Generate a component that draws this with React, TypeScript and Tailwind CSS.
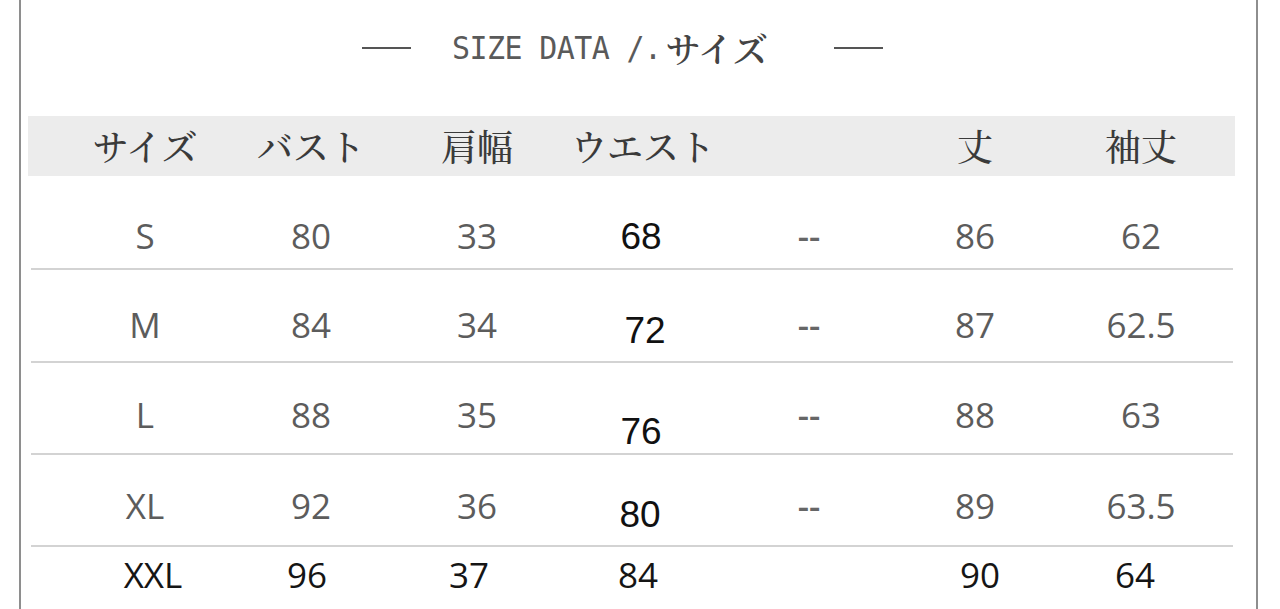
import React from 'react';

type Row = {
  cells: string[];
  pad: string;
  tone: 'gray' | 'black';
  shift?: Record<number, string>;
};

const headers = ['サイズ', 'バスト', '肩幅', 'ウエスト', '', '丈', '袖丈'];

// column 4 (ウエスト) is pasted in black and sits a bit lower than the rest
const rows: Row[] = [
  { cells: ['S', '80', '33', '68', '--', '86', '62'], pad: 'pt-[40px] pb-[12px]', tone: 'gray', shift: { 3: 'translate-y-[1px] -translate-x-[2px]' } },
  { cells: ['M', '84', '34', '72', '--', '87', '62.5'], pad: 'pt-[35px] pb-[16px]', tone: 'gray', shift: { 3: 'translate-y-[6px] translate-x-[2px]' } },
  { cells: ['L', '88', '35', '76', '--', '88', '63'], pad: 'pt-[32px] pb-[18px]', tone: 'gray', shift: { 3: 'translate-y-[17px] -translate-x-[2px]' } },
  { cells: ['XL', '92', '36', '80', '--', '89', '63.5'], pad: 'pt-[31px] pb-[19px]', tone: 'gray', shift: { 3: 'translate-y-[9px] -translate-x-[3px]' } },
  {
    cells: ['XXL', '96', '37', '84', '', '90', '64'],
    pad: 'pt-[8px]',
    tone: 'black',
    shift: { 0: 'translate-x-[8px]', 1: '-translate-x-[4px]', 2: '-translate-x-[8px]', 3: '-translate-x-[5px]', 5: 'translate-x-[5px]', 6: '-translate-x-[6px]' },
  },
];

const serifJp = "font-['Noto_Serif_CJK_JP','Noto_Sans_CJK_JP',serif]";

function Divider() {
  return <div className="ml-[10px] mr-[23px] h-[2px] bg-[#d3d3d3]" />;
}

function DataRow({ row }: { row: Row }) {
  return (
    <div className={`grid grid-cols-[repeat(7,166px)] pl-[41px] ${row.pad}`}>
      {row.cells.map((c, i) => {
        const black = row.tone === 'black' || i === 3;
        const font =
          i === 3 && row.tone === 'gray'
            ? "font-['Liberation_Sans',Arial,sans-serif] text-[37px] text-[#111]"
            : black
              ? "font-['Open_Sans',sans-serif] text-[35px] text-[#151515]"
              : i === 4
                ? "font-['Open_Sans',sans-serif] text-[35px] font-semibold text-[#666]"
                : "font-['Open_Sans',sans-serif] text-[35px] text-[#5c5c5c]";
        return (
          <div key={i} className={`h-[40px] leading-[40px] text-center ${font} ${row.shift?.[i] ?? ''}`}>
            {c}
          </div>
        );
      })}
    </div>
  );
}

export default function App() {
  return (
    <div className="h-[609px] w-[1280px] bg-white overflow-hidden">
      <div className="ml-[19px] h-full w-[1239px] border-x-2 border-[#8e8e8e]">
        {/* title */}
        <div className="flex h-[96px] items-center pl-[341px] text-[#5a5a5a]">
          <div className="h-[2px] w-[49px] bg-[#555]" />
          <span className="ml-[41px] font-['DejaVu_Sans_Mono',monospace] text-[30px] leading-none tracking-[-0.6px] scale-y-[1.08]">
            SIZE DATA /.
          </span>
          <span className={`ml-[4px] ${serifJp} text-[35px] font-semibold leading-none text-[#444]`}>サイズ</span>
          <div className="ml-[66px] h-[2px] w-[49px] bg-[#555]" />
        </div>

        {/* header band */}
        <div className="mt-[20px] ml-[7px] mr-[21px] h-[60px] bg-[#ececec]">
          <div className="grid h-full grid-cols-[repeat(7,166px)] items-center pl-[34px]">
            {headers.map((h, i) => (
              <div key={i} className={`text-center ${serifJp} text-[36px] font-medium leading-none text-[#3a3a3a]`}>
                {h}
              </div>
            ))}
          </div>
        </div>

        {rows.map((r, i) => (
          <React.Fragment key={r.cells[0]}>
            <DataRow row={r} />
            {i < rows.length - 1 && <Divider />}
          </React.Fragment>
        ))}
      </div>
    </div>
  );
}
